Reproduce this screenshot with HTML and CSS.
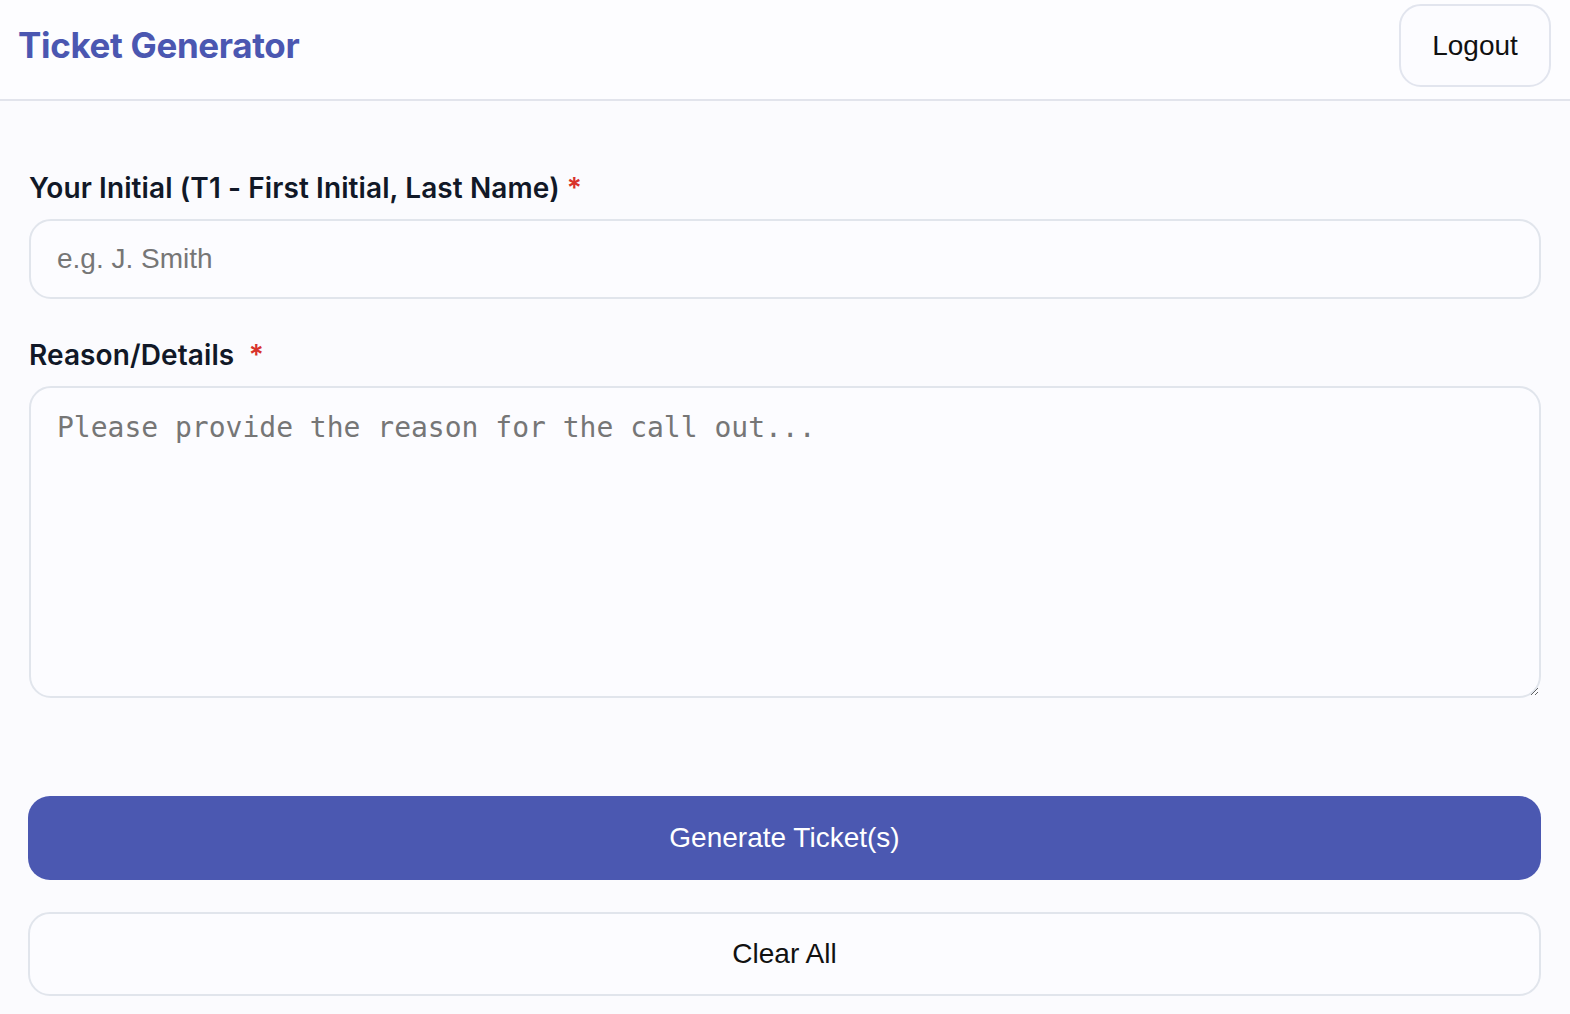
FILE: index.html
```html
<!DOCTYPE html>
<html>
<head>
<meta charset="utf-8">
<link rel="stylesheet" href="styles.css">
</head>
<body>
<header class="topbar">
  <h1 class="brand">Ticket Generator</h1>
  <button class="btn-logout">Logout</button>
</header>
<main class="content">
  <form class="form">
    <div class="field">
      <label class="label">Your Initial (T1 - First Initial, Last Name) <span class="req">*</span></label>
      <input class="input" type="text" placeholder="e.g. J. Smith">
    </div>
    <div class="field">
      <label class="label">Reason/Details &nbsp;<span class="req">*</span></label>
      <textarea class="textarea" placeholder="Please provide the reason for the call out..."></textarea>
    </div>
    <div class="actions">
      <button type="button" class="btn-primary">Generate Ticket(s)</button>
      <button type="button" class="btn-secondary">Clear All</button>
    </div>
  </form>
</main>
</body>
</html>
```

FILE: styles.css
```css
* { box-sizing: border-box; }
html, body { margin: 0; padding: 0; }
body {
  background: #fbfbfe;
  font-family: "Liberation Sans", Arial, sans-serif;
  height: 1014px;
  overflow: hidden;
}
.topbar {
  height: 101px;
  background: #fdfdff;
  border-bottom: 2px solid #e2e4ec;
  display: flex;
  align-items: flex-start;
  justify-content: space-between;
  padding: 0 19px 0 18px;
}
.brand {
  margin: 24px 0 0 0;
  font-family: Inter, "Noto Sans", sans-serif;
  font-weight: 700;
  font-size: 35px;
  letter-spacing: -0.35px;
  color: #4b57b1;
  line-height: 42px;
}
.btn-logout {
  margin-top: 4px;
  width: 152px;
  height: 83px;
  border: 2px solid #e2e5ee;
  border-radius: 22px;
  background: #fcfcff;
  font-family: "Liberation Sans", Arial, sans-serif;
  font-size: 28px;
  color: #111;
  padding: 0;
}
.content {
  padding: 67px 29px 0 28px;
}
.form {
  display: flex;
  flex-direction: column;
}
.field {
  display: flex;
  flex-direction: column;
}
.field + .field { margin-top: 36px; }
.label {
  font-family: Inter, "Noto Sans", sans-serif;
  font-weight: 600;
  font-size: 28px;
  letter-spacing: 0.1px;
  color: #111827;
  line-height: 40px;
  padding-left: 1px;
  margin-bottom: 11px;
}
.req { color: #d8322c; }
.input {
  height: 80px;
  border: 2px solid #e1e5ec;
  border-radius: 22px;
  background: #fcfcff;
  padding: 0 26px;
  font-family: "Liberation Sans", Arial, sans-serif;
  font-size: 28px;
  margin-left: 1px;
}
.input::placeholder { color: #767676; }
.textarea {
  height: 312px;
  border: 2px solid #e1e5ec;
  border-radius: 22px;
  background: #fcfcff;
  padding: 22px 26px;
  font-family: "DejaVu Sans Mono", "Liberation Mono", monospace;
  font-size: 28px;
  line-height: 36px;
  margin-left: 1px;
  resize: vertical;
}
.textarea::placeholder { color: #767676; }
.actions {
  display: flex;
  flex-direction: column;
  gap: 32px;
  margin-top: 98px;
}
.btn-primary {
  height: 84px;
  border: none;
  border-radius: 22px;
  background: #4b58b1;
  color: #fff;
  font-family: "Liberation Sans", Arial, sans-serif;
  font-size: 28px;
}
.btn-secondary {
  height: 84px;
  border: 2px solid #e1e5ec;
  border-radius: 22px;
  background: #fcfcff;
  color: #111;
  font-family: "Liberation Sans", Arial, sans-serif;
  font-size: 28px;
}
```
